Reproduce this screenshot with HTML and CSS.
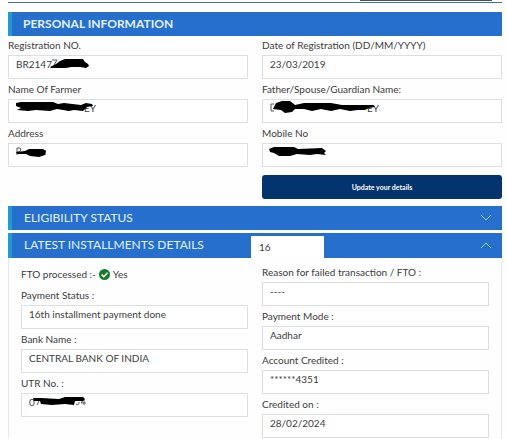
FILE: index.html
```
<!DOCTYPE html>
<html lang="en">
<head>
  <meta charset="UTF-8" />
  <meta name="viewport" content="width=device-width, initial-scale=1.0" />
  <title>Beneficiary Status</title>
  <link rel="stylesheet" href="styles.css">
</head>
<body>
  <div class="top-line"><span class="top-bar"></span></div>

  <main class="main-container">
    <!-- Personal Information -->
    <h2 class="section-title bold">PERSONAL INFORMATION</h2>
    <div class="columns">
      <div class="column">
        <div class="field">
          <label for="reg-no">Registration NO.</label>
          <input id="reg-no" type="text" value="BR2147" readonly />
          <svg class="mask" width="240" height="24" viewBox="0 0 240 24"><path class="letter" d="M44 5 H49 L46 10" /><path d="M42 12 L48 9 L52 6 L57 4 L75 4 L77 7 L80 9 L81 11 L78 13 L72 12 L63 12 L58 13 L50 13 L43 13 Z" /></svg>
        </div>
        <div class="field">
          <label for="farmer-name">Name Of Farmer</label>
          <input id="farmer-name" class="name-end" type="text" value="EY" readonly />
          <svg class="mask" width="240" height="24" viewBox="0 0 240 24"><path d="M8 4 L13 3 H45 L50 5 L56 4 L73 6 L78 4 L84 5 L85 7 L79 8 L75 12 L66 11 L61 12 L49 10 L42 12 L28 11 L20 12 L9 11 L13 9 L8 7 Z" /></svg>
        </div>
        <div class="field">
          <label for="address">Address</label>
          <input id="address" type="text" readonly />
          <svg class="mask" width="240" height="24" viewBox="0 0 240 24"><path class="letter" d="M9 12 V5 H12 L13 7 L11 9 H9 M37 7 V12" /><path d="M8 9 L17 8 L21 6 L35 6 L38 8 L37 12 L31 14 L22 13 L18 11 L9 11 Z" /></svg>
        </div>
      </div>
      <div class="column">
        <div class="field">
          <label for="reg-date">Date of Registration (DD/MM/YYYY)</label>
          <input id="reg-date" type="text" value="23/03/2019" readonly />
        </div>
        <div class="field">
          <label for="guardian-name">Father/Spouse/Guardian Name:</label>
          <input id="guardian-name" class="guardian-end" type="text" value="EY" readonly />
          <svg class="mask" width="240" height="24" viewBox="0 0 240 24"><path class="letter" d="M9 5 V12 M9 5 H12 M9 12 H12" /><path d="M11 10 L14 4 L20 2 L28 2 L33 6 L42 4 L69 4 L80 6 L111 6 L113 8 L107 9 L103 11 L96 11 L88 12 L78 10 L69 12 L59 10 L50 12 L42 10 L33 10 L30 13 L23 14 L19 11 Z" /></svg>
        </div>
        <div class="field">
          <label for="mobile">Mobile No</label>
          <input id="mobile" type="text" readonly />
          <svg class="mask" width="240" height="24" viewBox="0 0 240 24"><path d="M7 6 L12 4 L32 4 L36 6 L60 5 L64 8 L62 10 L64 12 L55 11 L48 12 L35 11 L28 13 L17 13 L12 10 L8 9 Z" /></svg>
        </div>
        <button type="button" class="update-btn">Update your details</button>
      </div>
    </div>

    <!-- Accordions -->
    <section class="accordion">
      <h2 class="section-title">
        <button type="button" class="toggle-btn" aria-expanded="false">ELIGIBILITY STATUS
          <svg class="chevron" width="12" height="7" viewBox="0 0 12 7"><path d="M1 1 L6 6 L11 1" /></svg>
        </button>
      </h2>
    </section>

    <section class="accordion">
      <div class="section-title installments">
        <h2 class="title-text">LATEST INSTALLMENTS DETAILS</h2>
        <select class="installment-select" aria-label="Installment number">
          <option>16</option>
        </select>
        <button type="button" class="toggle-btn icon-only" aria-expanded="true" aria-label="Toggle details">
          <svg class="chevron" width="12" height="7" viewBox="0 0 12 7"><path d="M1 6 L6 1 L11 6" /></svg>
        </button>
      </div>
      <div class="columns panel">
        <div class="column">
          <p class="fto">FTO processed :-
            <svg class="check" width="11" height="11" viewBox="0 0 11 11"><circle cx="5.5" cy="5.5" r="5.5" /><path d="M2.6 5.6 L4.8 7.7 L8.5 3.8" /></svg>
            Yes</p>
          <div class="field">
            <label for="pay-status">Payment Status :</label>
            <input id="pay-status" type="text" value="16th installment payment done" readonly />
          </div>
          <div class="field">
            <label for="bank">Bank Name :</label>
            <input id="bank" type="text" value="CENTRAL BANK OF INDIA" readonly />
          </div>
          <div class="field">
            <label for="utr">UTR No. :</label>
            <input id="utr" type="text" value="0" readonly />
            <svg class="mask" width="228" height="24" viewBox="0 0 228 24"><path class="letter" d="M14 6 H19 L16 12 M55 11 Q58 13 58 9 M63 12 V6 L60 10 H65" /><path d="M12 5 L20 5 L38 6 L44 4 L62 4 L64 6 L62 8 L54 8 L53 12 L44 11 L31 12 L20 11 L19 8 L13 8 Z" /></svg>
          </div>
        </div>
        <div class="column">
          <div class="field">
            <label for="reason">Reason for failed transaction / FTO :</label>
            <input id="reason" type="text" value="----" readonly />
          </div>
          <div class="field">
            <label for="pay-mode">Payment Mode :</label>
            <input id="pay-mode" type="text" value="Aadhar" readonly />
          </div>
          <div class="field">
            <label for="account">Account Credited :</label>
            <input id="account" type="text" value="******4351" readonly />
          </div>
          <div class="field">
            <label for="credited-on">Credited on :</label>
            <input id="credited-on" type="text" value="28/02/2024" readonly />
          </div>
        </div>
      </div>
    </section>
  </main>
</body>
</html>
```
FILE: styles.css
```
* {
  box-sizing: border-box;
}
body {
  font-family: Lato, "Liberation Sans", sans-serif;
  font-size: 10px;
  margin: 0;
  padding: 0 5px 0 8px;
  background-color: #fefefe;
  color: #3c3c3c;
}
.top-line {
  display: flex;
  justify-content: flex-end;
  height: 3px;
  padding-right: 10px;
  border-bottom: 1px solid #4a6f94;
}
.top-bar {
  width: 132px;
  height: 1px;
  background-color: #44525c;
}
.main-container {
  padding-top: 9px;
}
.section-title {
  display: flex;
  align-items: center;
  height: 24px;
  margin: 0;
  padding: 0 0 1px 12px;
  border-left: 4px solid #1f9ad6;
  background-color: #266fcd;
  color: #e4f3ff;
  font-size: 12px;
  font-weight: 400;
}
.section-title.bold {
  padding-left: 11px;
  font-weight: 700;
}
.columns {
  display: grid;
  grid-template-columns: 1fr 1fr;
  gap: 14px;
}
.column {
  display: flex;
  flex-direction: column;
  gap: 1px;
  min-width: 0;
}
.field {
  position: relative;
}
.field label {
  display: block;
  line-height: 19px;
}
.field input {
  display: block;
  width: 100%;
  height: 24px;
  padding: 0 7px 7px;
  border: 1px solid #dcdfe2;
  background-color: #fff;
  color: #3c3c3c;
  font: inherit;
}
.field .name-end {
  padding-left: 75px;
}
.field .guardian-end {
  padding-left: 104px;
}
/* hides private values */
.mask {
  position: absolute;
  left: 0;
  bottom: 0;
  fill: #000;
  pointer-events: none;
}
.mask .letter {
  fill: none;
  stroke: #555;
}
.update-btn {
  height: 24px;
  margin: 7px 0;
  border: none;
  border-radius: 3px;
  background-color: #03346e;
  color: #fff;
  font-family: inherit;
  font-size: 7px;
  font-weight: 700;
  cursor: pointer;
}
.accordion + .accordion {
  margin-top: 3px;
}
.toggle-btn {
  display: flex;
  flex: 1;
  align-items: center;
  justify-content: space-between;
  padding: 0 10px 0 0;
  border: none;
  background: none;
  color: inherit;
  font: inherit;
  cursor: pointer;
}
.icon-only {
  justify-content: flex-end;
}
.chevron {
  fill: none;
  stroke: #9fd0f5;
}
.installments {
  display: grid;
  grid-template-columns: calc(50% - 12px) 73px 1fr;
  align-items: stretch;
  height: 25px;
  padding-bottom: 0;
}
.title-text {
  align-self: center;
  margin: 0;
  padding-bottom: 2px;
  font-size: 12px;
  font-weight: 400;
}
.installment-select {
  appearance: none;
  margin-top: 3px;
  padding: 0 8px;
  border: none;
  border-radius: 0;
  background-color: #fff;
  color: #3c3c3c;
  font-family: inherit;
  font-size: 10px;
}
.panel {
  padding: 5px 12px 0;
  border: 1px solid #e3e8ee;
  border-width: 0 1px;
}
.fto {
  display: flex;
  align-items: center;
  gap: 3px;
  height: 22px;
  margin: 0;
}
.check circle {
  fill: #137d2b;
}
.check path {
  fill: none;
  stroke: #fff;
  stroke-width: 1.5;
}
```
